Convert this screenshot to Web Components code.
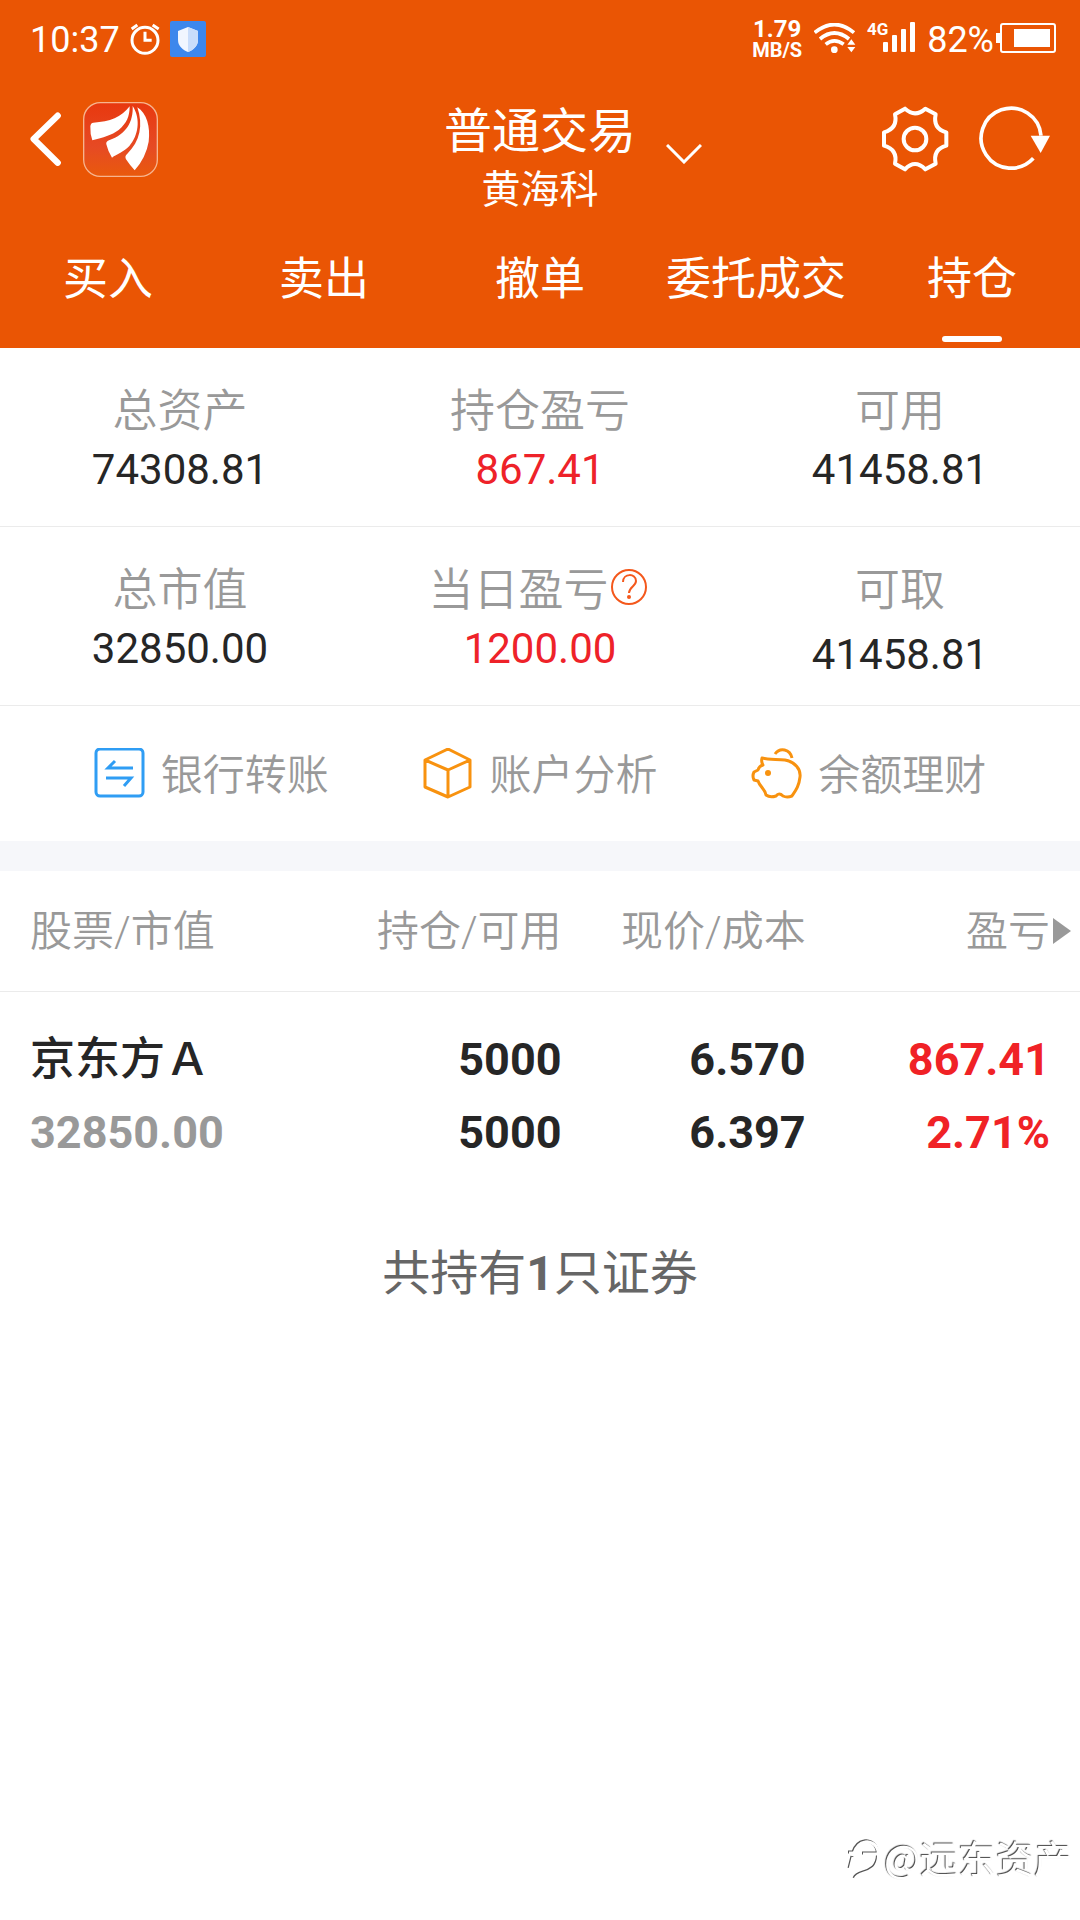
<!DOCTYPE html>
<html lang="zh-CN">
<head>
<meta charset="utf-8">
<meta name="viewport" content="width=device-width, initial-scale=1">
<title>普通交易</title>
<style>
    body {
        margin: 0;
        background: #fff;
        color: #262626;
        font-family: Roboto, "Noto Sans CJK SC", sans-serif;
    }
</style>
</head>
<body>
<trade-app></trade-app>

<script>
const define = (name, html) => {
    const template = document.createElement('template');
    template.innerHTML = html;
    customElements.define(name, class extends HTMLElement {
        constructor () {
            super();
            this.attachShadow({ mode: 'open' });
            this.shadowRoot.appendChild(template.content.cloneNode(true));
        }
    });
};

define('status-bar', `
    <style>
        :host {
            display: flex;
            align-items: center;
            justify-content: space-between;
            height: 78px;
            padding: 0 24px 0 30px;
            font-size: 36px;
            line-height: 40px;
        }
        .group {
            display: flex;
            align-items: center;
        }
        .left {
            gap: 10px;
        }
        .text {
            padding-top: 2px;
        }
        .speed {
            display: grid;
            justify-items: center;
            margin-right: 12px;
            font-size: 24px;
            font-weight: 700;
            line-height: 22px;
        }
        .speed small {
            font-size: 20px;
            line-height: 20px;
        }
        .signal {
            margin: 0 11px 0 10px;
        }
        .battery {
            margin-left: 2px;
        }
        svg {
            display: block;
        }
    </style>
    <div class="group left">
        <span class="text">10:37</span>
        <svg width="30" height="32" viewBox="391 66 90 96" fill="none" stroke="#fff" stroke-width="9">
            <circle cx="436" cy="118" r="39"/>
            <path d="M436 92v26h20M396 84l17-12M459 72l18 12"/>
        </svg>
        <svg width="36" height="36" viewBox="0 0 36 36">
            <rect width="36" height="36" rx="2" fill="#3d87ec"/>
            <path d="M18 6l10 4v9c0 6-5 10-10 12-5-2-10-6-10-12v-9z" fill="#f1f6ff"/>
            <path d="M18 6l10 4v9c0 6-5 10-10 12z" fill="#c9ddfb"/>
        </svg>
    </div>
    <div class="group">
        <div class="speed"><span>1.79</span><small>MB/S</small></div>
        <svg width="42" height="32" viewBox="281 66 126 96" fill="none" stroke="#fff" stroke-width="11">
            <path d="M283 95Q342 46 401 95M299 114Q342 78 386 114M316 130Q342 109 370 130"/>
            <g fill="#fff" stroke="none">
                <circle cx="342" cy="146" r="10"/>
                <path d="M393 115l12 16h-24zM381 138h24l-12 16z"/>
            </g>
        </svg>
        <svg class="signal" width="50" height="40" viewBox="0 0 50 40" fill="#fff">
            <text x="1" y="16" font-size="17" font-weight="700">4G</text>
            <rect x="17" y="23" width="5" height="10" rx="1"/>
            <rect x="26" y="16" width="5" height="17" rx="1"/>
            <rect x="35" y="10" width="5" height="23" rx="1"/>
            <rect x="44" y="3" width="5" height="30" rx="1"/>
        </svg>
        <span class="text">82%</span>
        <svg class="battery" width="60" height="32" viewBox="0 0 60 32" fill="#fff">
            <rect x="5" y="1" width="54" height="28" rx="2" fill="none" stroke="#fff" stroke-width="2"/>
            <rect x="0" y="10" width="4" height="10"/>
            <rect x="18" y="6" width="36" height="18"/>
        </svg>
    </div>
`);

define('title-bar', `
    <style>
        :host {
            display: grid;
            grid-template-columns: 1fr auto 1fr;
            padding: 22px 30px 0;
        }
        button {
            display: block;
            padding: 0;
            border: 0;
            background: none;
            color: inherit;
        }
        svg {
            display: block;
        }
        .tools {
            display: flex;
            align-items: center;
            gap: 22px;
            height: 78px;
        }
        .more {
            align-self: flex-end;
            margin: 0 auto 14px 30px;
        }
        .right {
            gap: 30px;
        }
        .heading {
            padding-top: 2px;
        }
        h1, p {
            margin: 0;
            font-size: 48px;
            font-weight: 400;
            line-height: 59px;
            text-align: center;
        }
        p {
            font-size: 39px;
        }
    </style>
    <div class="tools">
        <button aria-label="返回">
            <svg width="31" height="54" viewBox="91 335 93 162" fill="none" stroke="#fff" stroke-width="19" stroke-linejoin="round" stroke-linecap="round">
                <path d="M174 346L102 416L174 487"/>
            </svg>
        </button>
        <svg width="75" height="75" viewBox="249 306 225 225">
            <defs>
                <linearGradient id="logo" x1="0" y1="0" x2="0" y2="1">
                    <stop offset="0" stop-color="#e8380f"/>
                    <stop offset=".6" stop-color="#e64a24"/>
                    <stop offset="1" stop-color="#e95a0c"/>
                </linearGradient>
            </defs>
            <rect x="251" y="308" width="221" height="221" rx="50" fill="url(#logo)" stroke="#f7b48f" stroke-width="4"/>
            <g fill="#fff">
                <path d="M389 319C364 352 330 365 280 368Q272 369 271 379Q270 402 277 421C310 412 335 406 356 390C380 370 389 350 389 319Z"/>
                <path d="M398 318C400 365 380 402 327 421Q317 425 319 433Q324 455 336 473C350 462 372 456 388 438C414 408 424 358 398 318Z"/>
                <path d="M412 322C440 340 452 380 446 425Q438 472 404 511Q390 496 378 478Q373 468 382 461C420 425 430 375 412 322Z"/>
            </g>
        </svg>
    </div>
    <div class="heading">
        <h1><slot></slot></h1>
        <p><slot name="user"></slot></p>
    </div>
    <div class="tools right">
        <button class="more" aria-label="切换账户">
            <svg width="36" height="20" viewBox="0 0 36 20" fill="none" stroke="#fff" stroke-width="3">
                <path d="M1 1l17 17L35 1"/>
            </svg>
        </button>
        <button aria-label="设置">
            <svg width="68" height="66" viewBox="483 319 204 198" fill="none" stroke="#fff" stroke-width="12" stroke-linejoin="round">
                <path d="M555 327L525 344C531 372 520 390 492 398V438C520 446 531 464 525 492L555 509C575 488 595 488 616 509L647 492C641 464 650 446 679 438V398C650 390 641 372 647 344L616 327C595 346 575 346 555 327Z"/>
                <circle cx="585" cy="418" r="34"/>
            </svg>
        </button>
        <button aria-label="刷新">
            <svg width="71" height="66" viewBox="777 319 213 198" fill="none" stroke="#fff" stroke-width="11">
                <path d="M963 408A90 90 0 1 0 940 476"/>
                <path d="M932 408h58l-28 52z" fill="#fff" stroke="none"/>
            </svg>
        </button>
    </div>
`);

define('tab-item', `
    <style>
        :host {
            flex: 1;
        }
        a {
            display: block;
            padding: 4px 0 12px;
            color: inherit;
            font-size: 45px;
            line-height: 112px;
            text-align: center;
            text-decoration: none;
            white-space: nowrap;
        }
        :host([active]) a {
            padding-bottom: 6px;
        }
        :host([active]) a::after {
            content: '';
            display: block;
            width: 60px;
            height: 6px;
            margin: 0 auto;
            border-radius: 3px;
            background: #fff;
        }
    </style>
    <a href="#"><slot></slot></a>
`);

define('asset-cell', `
    <style>
        :host {
            display: block;
            padding: 36px 0 28px;
            text-align: center;
            font-size: 42px;
            line-height: 56px;
        }
        .label {
            display: flex;
            align-items: center;
            justify-content: center;
            gap: 1px;
            color: #999;
            font-size: 45px;
            font-weight: 350;
        }
        .value {
            padding-top: var(--drop, 2px);
        }
        :host([up]) .value {
            color: #ee2229;
        }
    </style>
    <div class="label"><slot name="label"></slot></div>
    <div class="value"><slot></slot></div>
`);

define('help-button', `
    <style>
        :host {
            display: block;
            padding: 0 4px 8px 0;
        }
        button {
            display: block;
            padding: 0;
            border: 0;
            background: none;
        }
        svg {
            display: block;
        }
    </style>
    <button aria-label="说明">
        <svg width="38" height="38" viewBox="0 0 38 38" fill="none" stroke="#f4581c" stroke-width="2">
            <circle cx="19" cy="19" r="17"/>
            <path d="M13 14c0-9 13-9 13-1 0 5-7 6-7 12"/>
            <circle cx="19" cy="29" r="2" fill="#f4581c" stroke="none"/>
        </svg>
    </button>
`);

define('quick-link', `
    <style>
        :host {
            display: block;
        }
        a {
            display: flex;
            align-items: center;
            gap: 16px;
            color: #999;
            font-size: 42px;
            font-weight: 350;
            line-height: 56px;
            text-decoration: none;
        }
        span {
            padding-top: 4px;
        }
        ::slotted(svg) {
            display: block;
        }
    </style>
    <a href="#"><slot name="icon"></slot><span><slot></slot></span></a>
`);

define('holdings-table', `
    <style>
        :host {
            display: block;
        }
        table {
            width: 100%;
            border-collapse: collapse;
            table-layout: fixed;
            font-size: 45px;
            font-weight: 700;
            line-height: 73px;
            text-align: right;
        }
        thead {
            background: linear-gradient(#ebebeb, #ebebeb) bottom / 100% 1px no-repeat;
        }
        th {
            height: 121px;
            padding: 0;
            color: #999;
            font-size: 42px;
            font-weight: 350;
            white-space: nowrap;
        }
        td {
            padding: 31px 0 0;
        }
        th:first-child, td:first-child {
            padding-left: 30px;
            text-align: left;
        }
        th:last-child, td:last-child {
            padding-right: 30px;
        }
        .name {
            font-weight: 500;
        }
        .worth {
            color: #999;
        }
        .up {
            color: #f02226;
        }
        .next {
            display: inline-block;
            margin-right: -21px;
            margin-left: 3px;
            border: solid transparent;
            border-width: 13px 0 13px 18px;
            border-left-color: #999;
            vertical-align: 2px;
        }
    </style>
    <table>
        <colgroup>
            <col style="width: 29%"><col style="width: 23%"><col style="width: 22.6%"><col>
        </colgroup>
        <thead>
            <tr>
                <th>股票/市值</th>
                <th>持仓/可用</th>
                <th>现价/成本</th>
                <th>盈亏<span class="next"></span></th>
            </tr>
        </thead>
        <tbody>
            <tr>
                <td><div class="name">京东方Ａ</div><div class="worth">32850.00</div></td>
                <td>5000<br>5000</td>
                <td>6.570<br>6.397</td>
                <td class="up">867.41<br>2.71%</td>
            </tr>
        </tbody>
    </table>
`);

define('water-mark', `
    <style>
        :host {
            position: fixed;
            right: 8px;
            bottom: 35px;
            display: flex;
            align-items: center;
            gap: 3px;
            color: #fff;
            font-family: "Noto Sans CJK SC", sans-serif;
            font-size: 38px;
            line-height: 56px;
            text-shadow: -1px -1px 1px #444;
        }
        svg {
            margin-top: 6px;
            filter: drop-shadow(-1px -1px 0 #555);
        }
    </style>
    <svg width="34" height="42" viewBox="0 0 34 42" fill="none" stroke="#fff" stroke-width="3">
        <path d="M8 40C11 33 19 36 27 29C32 23 32 17 31 12C29 4 22 2 18 3C12 4 9 8 7 14H2M6 18L3 30M16 15H31"/>
    </svg>
    <span><slot></slot></span>
`);

define('trade-app', `
    <style>
        :host {
            display: block;
        }
        header {
            background: #ea5504;
            color: #fff;
        }
        nav {
            display: flex;
        }
        .assets {
            display: grid;
            grid-template-columns: repeat(3, 1fr);
            border-bottom: 1px solid #ebebeb;
        }
        .low {
            --drop: 8px;
            padding-bottom: 22px;
        }
        .links {
            display: flex;
            align-items: center;
            justify-content: space-evenly;
            height: 135px;
            border-bottom: 30px solid #f6f7fa;
        }
        footer {
            padding-top: 75px;
            color: #666;
            font-size: 48px;
            line-height: 60px;
            text-align: center;
        }
    </style>
    <header>
        <status-bar></status-bar>
        <title-bar>普通交易<span slot="user">黄海科</span></title-bar>
        <nav>
            <tab-item>买入</tab-item>
            <tab-item>卖出</tab-item>
            <tab-item>撤单</tab-item>
            <tab-item>委托成交</tab-item>
            <tab-item active>持仓</tab-item>
        </nav>
    </header>
    <main>
        <section class="assets">
            <asset-cell><span slot="label">总资产</span>74308.81</asset-cell>
            <asset-cell up><span slot="label">持仓盈亏</span>867.41</asset-cell>
            <asset-cell><span slot="label">可用</span>41458.81</asset-cell>
        </section>
        <section class="assets">
            <asset-cell><span slot="label">总市值</span>32850.00</asset-cell>
            <asset-cell up><span slot="label">当日盈亏</span><help-button slot="label"></help-button>1200.00</asset-cell>
            <asset-cell class="low"><span slot="label">可取</span>41458.81</asset-cell>
        </section>
        <section class="links">
            <quick-link>
                <svg slot="icon" width="51" height="51" viewBox="0 0 51 51" fill="none" stroke="#2f9df4" stroke-width="3">
                    <rect x="2" y="1" width="47" height="47" rx="4"/>
                    <path d="M39 20H14L21 13M12 30H37L30 38"/>
                </svg>
                银行转账
            </quick-link>
            <quick-link>
                <svg slot="icon" width="51" height="51" viewBox="0 0 51 51" fill="none" stroke="#f8920f" stroke-width="3" stroke-linejoin="round">
                    <path d="M26 1L48 12V39L26 49L3 39V12ZM3 12L26 22L48 12M26 22V49"/>
                </svg>
                账户分析
            </quick-link>
            <quick-link>
                <svg slot="icon" width="51" height="51" viewBox="0 0 51 51" fill="none" stroke="#f8920f" stroke-width="3" stroke-linejoin="round">
                    <path d="M11 10C18 12 26 11 34 12C44 14 50 21 49 29C48 38 45 42 41 48Q36 50 32 48Q28 44 25 48Q19 50 15 47C14 41 9 39 7 33L3 32Q1 28 3 24L7 22Q8 18 12 17Q10 14 11 10Z"/>
                    <path d="M24 6C29-1 39 1 41 10"/>
                    <circle cx="17" cy="25" r="3" fill="#f8920f" stroke="none"/>
                </svg>
                余额理财
            </quick-link>
        </section>
        <holdings-table></holdings-table>
    </main>
    <footer>共持有<b>1</b>只证券</footer>
    <water-mark>@远东资产</water-mark>
`);
</script>
</body>
</html>
